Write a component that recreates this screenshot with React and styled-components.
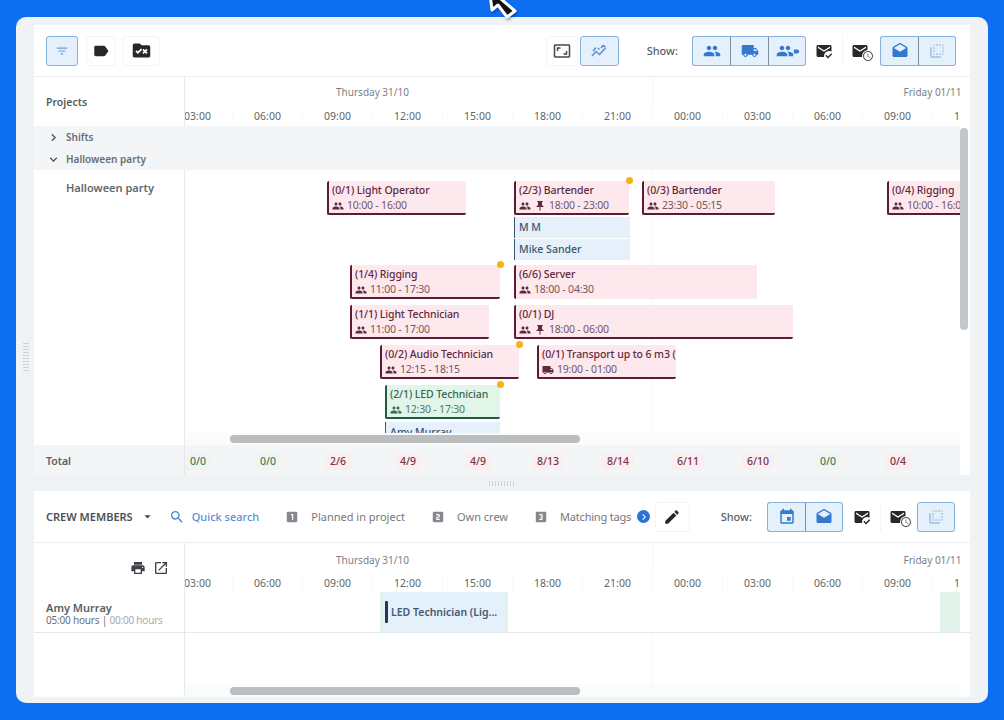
import React from 'react'
import styled, { createGlobalStyle, css } from 'styled-components'
import {
  MdFilterList,
  MdLabel,
  MdRuleFolder,
  MdAspectRatio,
  MdPeople,
  MdLocalShipping,
  MdMarkEmailRead,
  MdMail,
  MdSchedule,
  MdDrafts,
  MdFlipToBack,
  MdChevronRight,
  MdExpandMore,
  MdPushPin,
  MdArrowDropDown,
  MdSearch,
  MdLooksOne,
  MdLooksTwo,
  MdLooks3,
  MdEdit,
  MdEvent,
  MdPrint,
  MdOpenInNew,
} from 'react-icons/md'

const HOURS = ['00:00', '03:00', '06:00', '09:00', '12:00', '15:00', '18:00', '21:00']
const HOUR_CELLS = [...HOURS, ...HOURS.slice(0, 5)]
const TOTALS = ['', '0/0', '0/0', '2/6', '4/9', '4/9', '8/13', '8/14', '6/11', '6/10', '0/0', '0/4']

const SHIFTS = [
  { x: 142, y: 11, w: 139, title: '(0/1) Light Operator', time: '10:00 - 16:00' },
  { x: 329, y: 11, w: 115, title: '(2/3) Bartender', time: '18:00 - 23:00', pin: true, dot: true },
  { x: 329, y: 47, w: 116, name: 'M M' },
  { x: 329, y: 69, w: 116, name: 'Mike Sander' },
  { x: 457, y: 11, w: 133, title: '(0/3) Bartender', time: '23:30 - 05:15' },
  { x: 702, y: 11, w: 90, title: '(0/4) Rigging', time: '10:00 - 16:00' },
  { x: 165, y: 95, w: 150, title: '(1/4) Rigging', time: '11:00 - 17:30', dot: true },
  { x: 329, y: 95, w: 243, title: '(6/6) Server', time: '18:00 - 04:30', open: true },
  { x: 165, y: 135, w: 139, title: '(1/1) Light Technician', time: '11:00 - 17:00' },
  { x: 329, y: 135, w: 279, title: '(0/1) DJ', time: '18:00 - 06:00', pin: true },
  { x: 195, y: 175, w: 139, title: '(0/2) Audio Technician', time: '12:15 - 18:15', dot: true },
  { x: 352, y: 175, w: 139, title: '(0/1) Transport up to 6 m3 (', time: '19:00 - 01:00', truck: true },
  { x: 200, y: 215, w: 115, title: '(2/1) LED Technician', time: '12:30 - 17:30', dot: true, ok: true },
  { x: 200, y: 252, w: 115, name: 'Amy Murray' },
]

const GlobalStyle = createGlobalStyle`
  html, body {
    margin: 0;
    height: 720px;
    overflow: hidden;
    background: #0d6ef0;
    font-family: "Noto Sans", "Open Sans", sans-serif;
  }
`

const Page = styled.div`
  position: relative;
  width: 1004px;
  height: 720px;
  padding: 17px 16px;
  box-sizing: border-box;
`

const Cursor = styled.svg`
  position: absolute;
  left: 484px;
  top: 0;
  filter: drop-shadow(1px 2px 1px rgba(0, 0, 0, 0.3));
`

const Card = styled.main`
  position: relative;
  height: 686px;
  padding: 8px 18px 6px;
  box-sizing: border-box;
  background: #f0f3f5;
  border-radius: 10px;
  display: flex;
  flex-direction: column;
`

const SideGrip = styled.div`
  position: absolute;
  left: 7px;
  top: 326px;
  width: 6px;
  height: 28px;
  background: repeating-linear-gradient(#cdd2d7 0 1px, transparent 1px 3px);
`

const Panel = styled.section`
  position: relative;
  background: #fff;
  display: flex;
  flex-direction: column;
  ${(p) => p.$grow && 'flex: 1; min-height: 0;'}
  ${(p) => p.$height && `height: ${p.$height}px;`}
`

const Splitter = styled.div`
  height: 16px;
  display: flex;
  align-items: center;
  justify-content: center;
`

const SplitGrip = styled.div`
  width: 27px;
  height: 5px;
  margin-top: 1px;
  background: repeating-linear-gradient(90deg, #cdd2d7 0 1px, transparent 1px 3px);
`

const Toolbar = styled.div`
  height: 52px;
  flex: none;
  box-sizing: border-box;
  padding: 0 ${(p) => p.$pr || 14}px 0 12px;
  display: flex;
  align-items: center;
  border-bottom: 1px solid #eceef0;
  color: #555b61;
  font-size: 11px;
`

const Spacer = styled.div`
  flex: 1;
`

const ToolButton = styled.button`
  width: ${(p) => p.$w || 38}px;
  height: 30px;
  margin-left: ${(p) => p.$ml || 0}px;
  padding: 0;
  flex: none;
  display: flex;
  align-items: center;
  justify-content: center;
  background: #fff;
  border: 1px solid #f3f4f5;
  border-radius: 3px;
  color: ${(p) => p.$color || '#26282b'};
  font-size: ${(p) => p.$size || 18}px;
  ${(p) =>
    p.$active &&
    css`
      background: #e4f0fb;
      border-color: #86b0de;
      color: ${p.$color || '#3579cf'};
    `}
`

const ButtonGroup = styled.div`
  display: flex;
  margin-left: ${(p) => p.$ml || 0}px;
  ${ToolButton} {
    border-radius: 0;
    border-left-color: #7f8d9c;
    border-right-width: 0;
  }
  ${ToolButton}:first-child {
    border-left-color: #86b0de;
    border-radius: 3px 0 0 3px;
  }
  ${ToolButton}:last-child {
    border-right-width: 1px;
    border-radius: 0 3px 3px 0;
  }
`

const PlainGroup = styled.div`
  display: flex;
  ${ToolButton} {
    border-width: 0 1px 0 0;
    border-radius: 0;
  }
  ${ToolButton}:last-child {
    border: 0;
  }
`

const ShowLabel = styled.span`
  margin-left: ${(p) => p.$ml}px;
  font-weight: 500;
  color: #5c6167;
`

const IconStack = styled.span`
  position: relative;
  display: inline-flex;
  margin-right: ${(p) => p.$mr || 0}px;
`

const BadgeIcon = styled.span`
  position: absolute;
  right: ${(p) => p.$r}px;
  bottom: ${(p) => p.$b}px;
  display: flex;
  font-size: ${(p) => p.$size}px;
  border-radius: 50%;
  background: ${(p) => p.$bg || 'transparent'};
  color: ${(p) => p.$color || 'inherit'};
`

const CrewTitle = styled.span`
  font-weight: 600;
  font-size: 11px;
  color: #4b5056;
`

const Caret = styled(MdArrowDropDown)`
  font-size: 15px;
  margin-left: 7px;
  color: #44484d;
`

const Search = styled(MdSearch)`
  font-size: 16px;
  margin-left: 14px;
  color: #4b86cf;
`

const QuickSearch = styled.span`
  margin-left: 7px;
  font-weight: 500;
  color: #5a90d3;
`

const TagFilter = styled.span`
  display: flex;
  align-items: center;
  margin-left: ${(p) => p.$ml}px;
  color: #73787e;
  letter-spacing: ${(p) => p.$tight || 0}px;
  svg {
    font-size: 14px;
    margin-right: 12px;
    color: #85898e;
  }
`

const RoundNext = styled.span`
  width: 13px;
  height: 13px;
  margin-left: 6px;
  border-radius: 50%;
  background: #2a74d8;
  color: #fff;
  display: flex;
  align-items: center;
  justify-content: center;
  font-size: 12px;
  flex: none;
`

const Grid = styled.div`
  display: grid;
  grid-template-columns: 151px 775px 10px;
  flex: none;
  ${(p) => p.$height && `height: ${p.$height}px;`}
  ${(p) => p.$grow && 'flex: 1; min-height: 0;'}
  ${(p) => p.$line && 'border-bottom: 1px solid #e6e8eb; box-sizing: border-box;'}
  ${(p) => p.$bg && `background: linear-gradient(${p.$bg}, ${p.$bg}) 0 0 / 926px 100% no-repeat;`}
`

const LeftCell = styled.div`
  border-right: 1px solid #e6e8eb;
  box-sizing: border-box;
  padding-left: ${(p) => p.$pl || 12}px;
  display: flex;
  align-items: ${(p) => p.$align || 'center'};
  min-width: 0;
`

const ColumnTitle = styled.span`
  font-size: 10.5px;
  font-weight: 600;
  color: #585d62;
`

const HeaderTools = styled.div`
  display: flex;
  align-items: center;
  gap: 7px;
  width: 123px;
  justify-content: flex-end;
  color: #3d4146;
  font-size: 16px;
`

const Viewport = styled.div`
  position: relative;
  overflow: hidden;
  min-width: 0;
`

const Track = styled.div`
  margin-left: -92px;
  width: 1120px;
`

const Days = styled.div`
  display: flex;
  height: ${(p) => p.$h}px;
  align-items: flex-end;
`

const Day = styled.div`
  width: 560px;
  flex: none;
  height: 100%;
  box-sizing: border-box;
  padding-top: ${(p) => p.$pt}px;
  text-align: center;
  font-size: 10px;
  line-height: 14px;
  color: #7b8086;
  border-right: 1px solid #f4f5f6;
`

const Hours = styled.div`
  display: flex;
`

const Hour = styled.div`
  width: 70px;
  height: 17px;
  flex: none;
  box-sizing: border-box;
  text-align: center;
  font-size: 10.5px;
  line-height: 17px;
  color: #5f6469;
  border-right: 1px solid #f8f9f9;
`

const Band = styled.div`
  height: 44px;
  flex: none;
  background: #f3f5f6;
  display: grid;
  grid-template-rows: 22px 22px;
  font-size: 10px;
  font-weight: 600;
  color: #696e74;
  width: 926px;
`

const BandRow = styled.div`
  display: flex;
  align-items: center;
  padding-left: 12px;
  svg {
    font-size: 15px;
    margin-right: 5px;
    color: #4a4e53;
  }
`

const ProjectName = styled.span`
  font-size: 11px;
  font-weight: 600;
  color: #63686e;
  margin: 10px 0 0 20px;
`

const Timeline = styled.div`
  display: flex;
  flex-direction: column;
  min-height: 0;
`

const Canvas = styled.div`
  position: relative;
  flex: 1;
  overflow: hidden;
  background: linear-gradient(#f5f6f7, #f5f6f7) 467px 0 / 1px 100% no-repeat;
`

const tones = {
  red: { bg: '#fde8ed', line: '#5c1a33', text: '#5f2a3f', sub: '#75555f' },
  green: { bg: '#e1f5e9', line: '#1f5a43', text: '#3b6655', sub: '#537768' },
}

const ShiftBar = styled.div`
  position: absolute;
  box-sizing: border-box;
  height: 34px;
  padding-left: 3px;
  background: ${(p) => tones[p.$tone].bg};
  border-left: 2px solid ${(p) => tones[p.$tone].line};
  border-bottom: ${(p) => (p.$open ? '0' : `2px solid ${tones[p.$tone].line}`)};
  border-radius: 2px;
  font-size: 10.5px;
  white-space: nowrap;
`

const ShiftClip = styled.div`
  overflow: hidden;
`

const ShiftTitle = styled.div`
  font-weight: 500;
  line-height: 15px;
  margin-top: 2px;
  letter-spacing: -0.1px;
  color: ${(p) => tones[p.$tone].text};
`

const ShiftTime = styled.div`
  display: flex;
  align-items: center;
  line-height: 15px;
  letter-spacing: -0.2px;
  color: ${(p) => tones[p.$tone].sub};
  svg {
    font-size: 12px;
    margin-right: 3px;
    color: ${(p) => tones[p.$tone].text};
  }
`

const Dot = styled.span`
  position: absolute;
  top: -4px;
  right: -4px;
  width: 7px;
  height: 7px;
  border-radius: 50%;
  background: #f6b40e;
`

const PersonBar = styled.div`
  position: absolute;
  box-sizing: border-box;
  height: 21px;
  padding-left: 4px;
  background: #e5f0fa;
  border-left: 1px solid #3c5673;
  font-size: 10.5px;
  font-weight: 500;
  line-height: 21px;
  color: #3e5672;
`

const ScrollRow = styled.div`
  height: ${(p) => p.$h || 12}px;
  flex: none;
  display: flex;
  align-items: center;
  background: #fafbfb;
`

const ScrollThumb = styled.div`
  width: 350px;
  height: 8px;
  margin-left: 45px;
  border-radius: 4px;
  background: #bcbdbe;
`

const VerticalThumb = styled.div`
  position: absolute;
  right: 2px;
  top: 103px;
  width: 8px;
  height: 202px;
  border-radius: 4px;
  background: #c4c6c8;
`

const TotalLabel = styled.span`
  font-size: 10.5px;
  font-weight: 600;
  color: #5b6066;
  margin-top: 2px;
`

const TotalTrack = styled(Track)`
  display: flex;
  align-items: center;
  height: 100%;
  padding-top: 2px;
  box-sizing: border-box;
`

const TotalCell = styled.div`
  width: 70px;
  flex: none;
  display: flex;
  justify-content: center;
`

const TotalPill = styled.span`
  padding: 1px 5px;
  border-radius: 3px;
  font-size: 10.5px;
  line-height: 15px;
  font-weight: 500;
  color: ${(p) => (p.$ok ? '#46785d' : '#743549')};
  background: ${(p) => (p.$ok ? '#eff6f2' : '#fbeef1')};
`

const CrewInfo = styled.div`
  padding-top: 2px;
  font-size: 10px;
  line-height: 12px;
  letter-spacing: -0.2px;
  color: #6b7075;
`

const CrewName = styled.div`
  font-size: 11px;
  font-weight: 600;
  line-height: 13px;
  letter-spacing: 0;
  color: #5a5e63;
`

const MutedHours = styled.span`
  color: #a6aaae;
`

const Assignment = styled.div`
  position: absolute;
  left: ${(p) => p.$x}px;
  top: 0;
  bottom: 0;
  width: ${(p) => p.$w}px;
  display: flex;
  align-items: center;
  box-sizing: border-box;
  padding-left: 5px;
  background: ${(p) => p.$bg};
  font-size: 10.5px;
  font-weight: 600;
  color: #465a72;
  white-space: nowrap;
`

const AssignmentMark = styled.span`
  width: 3px;
  height: 22px;
  margin-right: 3px;
  border-radius: 1px;
  background: #26385a;
`

function TimeHeader({ dayHeight, dayPadding }) {
  return (
    <Viewport>
      <Track>
        <Days $h={dayHeight}>
          <Day $pt={dayPadding}>Thursday 31/10</Day>
          <Day $pt={dayPadding}>Friday 01/11</Day>
        </Days>
        <Hours>
          {HOUR_CELLS.map((hour, i) => (
            <Hour key={i}>{hour}</Hour>
          ))}
        </Hours>
      </Track>
    </Viewport>
  )
}

function TrendIcon() {
  return (
    <svg width='18' height='18' viewBox='0 0 18 18' fill='none' stroke='currentColor' strokeWidth='1.5'>
      <path d='M2 14 L6 9.5 L9.5 12.5 L15.5 6' />
      <path d='M3 9 L6 5.5 M8 6 L9.5 7.5 M11 6 L13 3.5 L15.5 5' />
    </svg>
  )
}

function MailClock() {
  return (
    <IconStack $mr={3}>
      <MdMail />
      <BadgeIcon $r={-5} $b={-2} $size={12} $bg='#fff' $color='#55595e'>
        <MdSchedule />
      </BadgeIcon>
    </IconStack>
  )
}

function Shift({ shift }) {
  const tone = shift.ok ? 'green' : 'red'
  const place = { left: shift.x, top: shift.y, width: shift.w }
  if (shift.name) {
    return <PersonBar style={place}>{shift.name}</PersonBar>
  }
  return (
    <ShiftBar style={place} $tone={tone} $open={shift.open}>
      <ShiftClip>
        <ShiftTitle $tone={tone}>{shift.title}</ShiftTitle>
        <ShiftTime $tone={tone}>
          {shift.truck ? <MdLocalShipping /> : <MdPeople />}
          {shift.pin && <MdPushPin />}
          {shift.time}
        </ShiftTime>
      </ShiftClip>
      {shift.dot && <Dot />}
    </ShiftBar>
  )
}

export default function App() {
  return (
    <Page>
      <GlobalStyle />
      <Card>
        <SideGrip />
        <Panel $height={450}>
          <Toolbar>
            <ToolButton $w={32} $active $size={14} $color='#6d9dd6'>
              <MdFilterList />
            </ToolButton>
            <ToolButton $w={30} $ml={8}>
              <MdLabel />
            </ToolButton>
            <ToolButton $w={37} $ml={7} $size={21}>
              <MdRuleFolder />
            </ToolButton>
            <Spacer />
            <ToolButton $w={32} $color='#44484d'>
              <MdAspectRatio />
            </ToolButton>
            <ToolButton $w={39} $ml={2} $active $color='#5b90d2'>
              <TrendIcon />
            </ToolButton>
            <ShowLabel $ml={28}>Show:</ShowLabel>
            <ButtonGroup $ml={14}>
              <ToolButton $active>
                <MdPeople />
              </ToolButton>
              <ToolButton $active>
                <MdLocalShipping />
              </ToolButton>
              <ToolButton $active>
                <IconStack $mr={5}>
                  <MdPeople />
                  <BadgeIcon $r={-6} $b={5} $size={7}>
                    <MdLabel />
                  </BadgeIcon>
                </IconStack>
              </ToolButton>
            </ButtonGroup>
            <PlainGroup>
              <ToolButton $w={37}>
                <MdMarkEmailRead />
              </ToolButton>
              <ToolButton $w={37}>
                <MailClock />
              </ToolButton>
            </PlainGroup>
            <ButtonGroup>
              <ToolButton $active>
                <MdDrafts />
              </ToolButton>
              <ToolButton $active $color='#9dbde2'>
                <MdFlipToBack />
              </ToolButton>
            </ButtonGroup>
          </Toolbar>

          <Grid $height={49}>
            <LeftCell>
              <ColumnTitle>Projects</ColumnTitle>
            </LeftCell>
            <TimeHeader dayHeight={31} dayPadding={8} />
          </Grid>

          <Band>
            <BandRow>
              <MdChevronRight />
              Shifts
            </BandRow>
            <BandRow>
              <MdExpandMore />
              Halloween party
            </BandRow>
          </Band>

          <Grid $grow>
            <LeftCell $align='flex-start'>
              <ProjectName>Halloween party</ProjectName>
            </LeftCell>
            <Timeline>
              <Canvas>
                {SHIFTS.map((shift) => (
                  <Shift key={`${shift.x}-${shift.y}`} shift={shift} />
                ))}
              </Canvas>
              <ScrollRow>
                <ScrollThumb />
              </ScrollRow>
            </Timeline>
          </Grid>
          <VerticalThumb />

          <Grid $height={30} $bg='#f3f5f6'>
            <LeftCell>
              <TotalLabel>Total</TotalLabel>
            </LeftCell>
            <Viewport>
              <TotalTrack>
                {TOTALS.map((total, i) => (
                  <TotalCell key={i}>
                    {total && <TotalPill $ok={total === '0/0'}>{total}</TotalPill>}
                  </TotalCell>
                ))}
              </TotalTrack>
            </Viewport>
          </Grid>
        </Panel>

        <Splitter>
          <SplitGrip />
        </Splitter>

        <Panel $grow>
          <Toolbar $pr={15}>
            <CrewTitle>CREW MEMBERS</CrewTitle>
            <Caret />
            <Search />
            <QuickSearch>Quick search</QuickSearch>
            <TagFilter $ml={26}>
              <MdLooksOne />
              Planned in project
            </TagFilter>
            <TagFilter $ml={26}>
              <MdLooksTwo />
              Own crew
            </TagFilter>
            <TagFilter $ml={26} $tight={-0.2}>
              <MdLooks3 />
              Matching tags
            </TagFilter>
            <RoundNext>
              <MdChevronRight />
            </RoundNext>
            <Spacer />
            <ToolButton $w={35}>
              <MdEdit />
            </ToolButton>
            <ShowLabel $ml={31}>Show:</ShowLabel>
            <ButtonGroup $ml={15}>
              <ToolButton $active>
                <MdEvent />
              </ToolButton>
              <ToolButton $active>
                <MdDrafts />
              </ToolButton>
            </ButtonGroup>
            <PlainGroup>
              <ToolButton>
                <MdMarkEmailRead />
              </ToolButton>
              <ToolButton $w={36}>
                <MailClock />
              </ToolButton>
            </PlainGroup>
            <ToolButton $active $color='#9dbde2'>
              <MdFlipToBack />
            </ToolButton>
          </Toolbar>

          <Grid $height={49}>
            <LeftCell>
              <HeaderTools>
                <MdPrint />
                <MdOpenInNew />
              </HeaderTools>
            </LeftCell>
            <TimeHeader dayHeight={32} dayPadding={10} />
          </Grid>

          <Grid $height={41} $line>
            <LeftCell>
              <CrewInfo>
                <CrewName>Amy Murray</CrewName>
                05:00 hours | <MutedHours>00:00 hours</MutedHours>
              </CrewInfo>
            </LeftCell>
            <Viewport>
              <Assignment $x={195} $w={128} $bg='linear-gradient(90deg, #e0f1ea, #e4f0fa 6px, #e4f0fa 122px, #e0f1ea)'>
                <AssignmentMark />
                LED Technician (Lig...
              </Assignment>
              <Assignment $x={755} $w={20} $bg='#e1f2ea' />
            </Viewport>
          </Grid>

          <Grid $grow>
            <LeftCell />
            <Timeline>
              <Canvas />
              <ScrollRow $h={13}>
                <ScrollThumb />
              </ScrollRow>
            </Timeline>
          </Grid>
        </Panel>
      </Card>
      <Cursor width='36' height='24' viewBox='0 0 36 24'>
        <path d='M6 -6 L19 -6 L17 -1 L31 11 L23 17 L14 5 L8 10 Z' fill='#111' stroke='#fff' strokeWidth='3' strokeLinejoin='round' />
      </Cursor>
    </Page>
  )
}
